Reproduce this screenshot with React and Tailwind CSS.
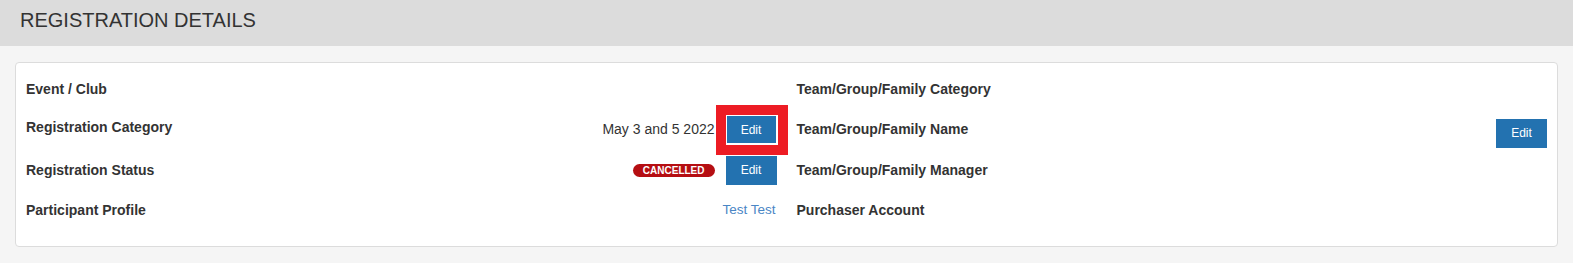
import React from 'react';

const font = { fontFamily: '"Liberation Sans", Arial, sans-serif' };

function EditButton({ highlighted = false, className = '' }) {
  const btn = (
    <button
      className={`h-[29px] w-[51px] bg-[#2372b0] text-white text-[12px] leading-none ${
        highlighted ? 'shadow-[inset_0_0_0_1px_#ffffff]' : ''
      } ${className}`}
    >
      Edit
    </button>
  );
  if (!highlighted) return btn;
  return (
    <span className="relative inline-flex">
      {btn}
      {/* annotation box */}
      <span className="pointer-events-none absolute -top-[10px] -left-[10px] -right-[11px] -bottom-[11px] border-[10px] border-[#ed1c24]"></span>
    </span>
  );
}

function Label({ children, className = '' }) {
  return <span className={`text-[14px] font-bold text-[#333] ${className}`}>{children}</span>;
}

export default function App() {
  return (
    <div className="min-h-[263px] bg-[#f5f5f5]" style={font}>
      {/* Header */}
      <div className="h-[46px] bg-[#dcdcdc] flex items-center px-[20px]">
        <h1 className="text-[20px] text-[#333] uppercase -mt-[7px]">Registration Details</h1>
      </div>

      {/* Card */}
      <div className="mx-[15px] mt-[16px] bg-white border border-[#dcdcdc] rounded-[4px] pt-[6px] pb-[15px] grid grid-cols-2">
        {/* Left column */}
        <div className="px-[10px] flex flex-col">
          <div className="h-[40px] flex items-center justify-between">
            <Label>Event / Club</Label>
          </div>
          <div className="h-[41px] flex items-center justify-between">
            <Label className="-mt-[5px]">Registration Category</Label>
            <div className="flex items-center gap-[11px]">
              <span className="text-[14px] text-[#333]">May 3 and 5 2022</span>
              <EditButton highlighted />
            </div>
          </div>
          <div className="h-[40px] flex items-center justify-between">
            <Label>Registration Status</Label>
            <div className="flex items-center gap-[11px]">
              <span className="h-[13px] px-[10px] rounded-full bg-[#b50e12] text-white text-[10px] font-bold leading-[13px] uppercase">
                Cancelled
              </span>
              <EditButton />
            </div>
          </div>
          <div className="h-[41px] flex items-center justify-between">
            <Label>Participant Profile</Label>
            <a className="text-[13.5px] text-[#4a86c5] mr-[1px]" href="#">
              Test Test
            </a>
          </div>
        </div>

        {/* Right column */}
        <div className="px-[10px] flex flex-col">
          <div className="h-[40px] flex items-center justify-between">
            <Label>Team/Group/Family Category</Label>
          </div>
          <div className="h-[41px] flex items-center justify-between">
            <Label>Team/Group/Family Name</Label>
            <EditButton className="mt-[7px]" />
          </div>
          <div className="h-[40px] flex items-center justify-between">
            <Label>Team/Group/Family Manager</Label>
          </div>
          <div className="h-[41px] flex items-center justify-between">
            <Label>Purchaser Account</Label>
          </div>
        </div>
      </div>
    </div>
  );
}
